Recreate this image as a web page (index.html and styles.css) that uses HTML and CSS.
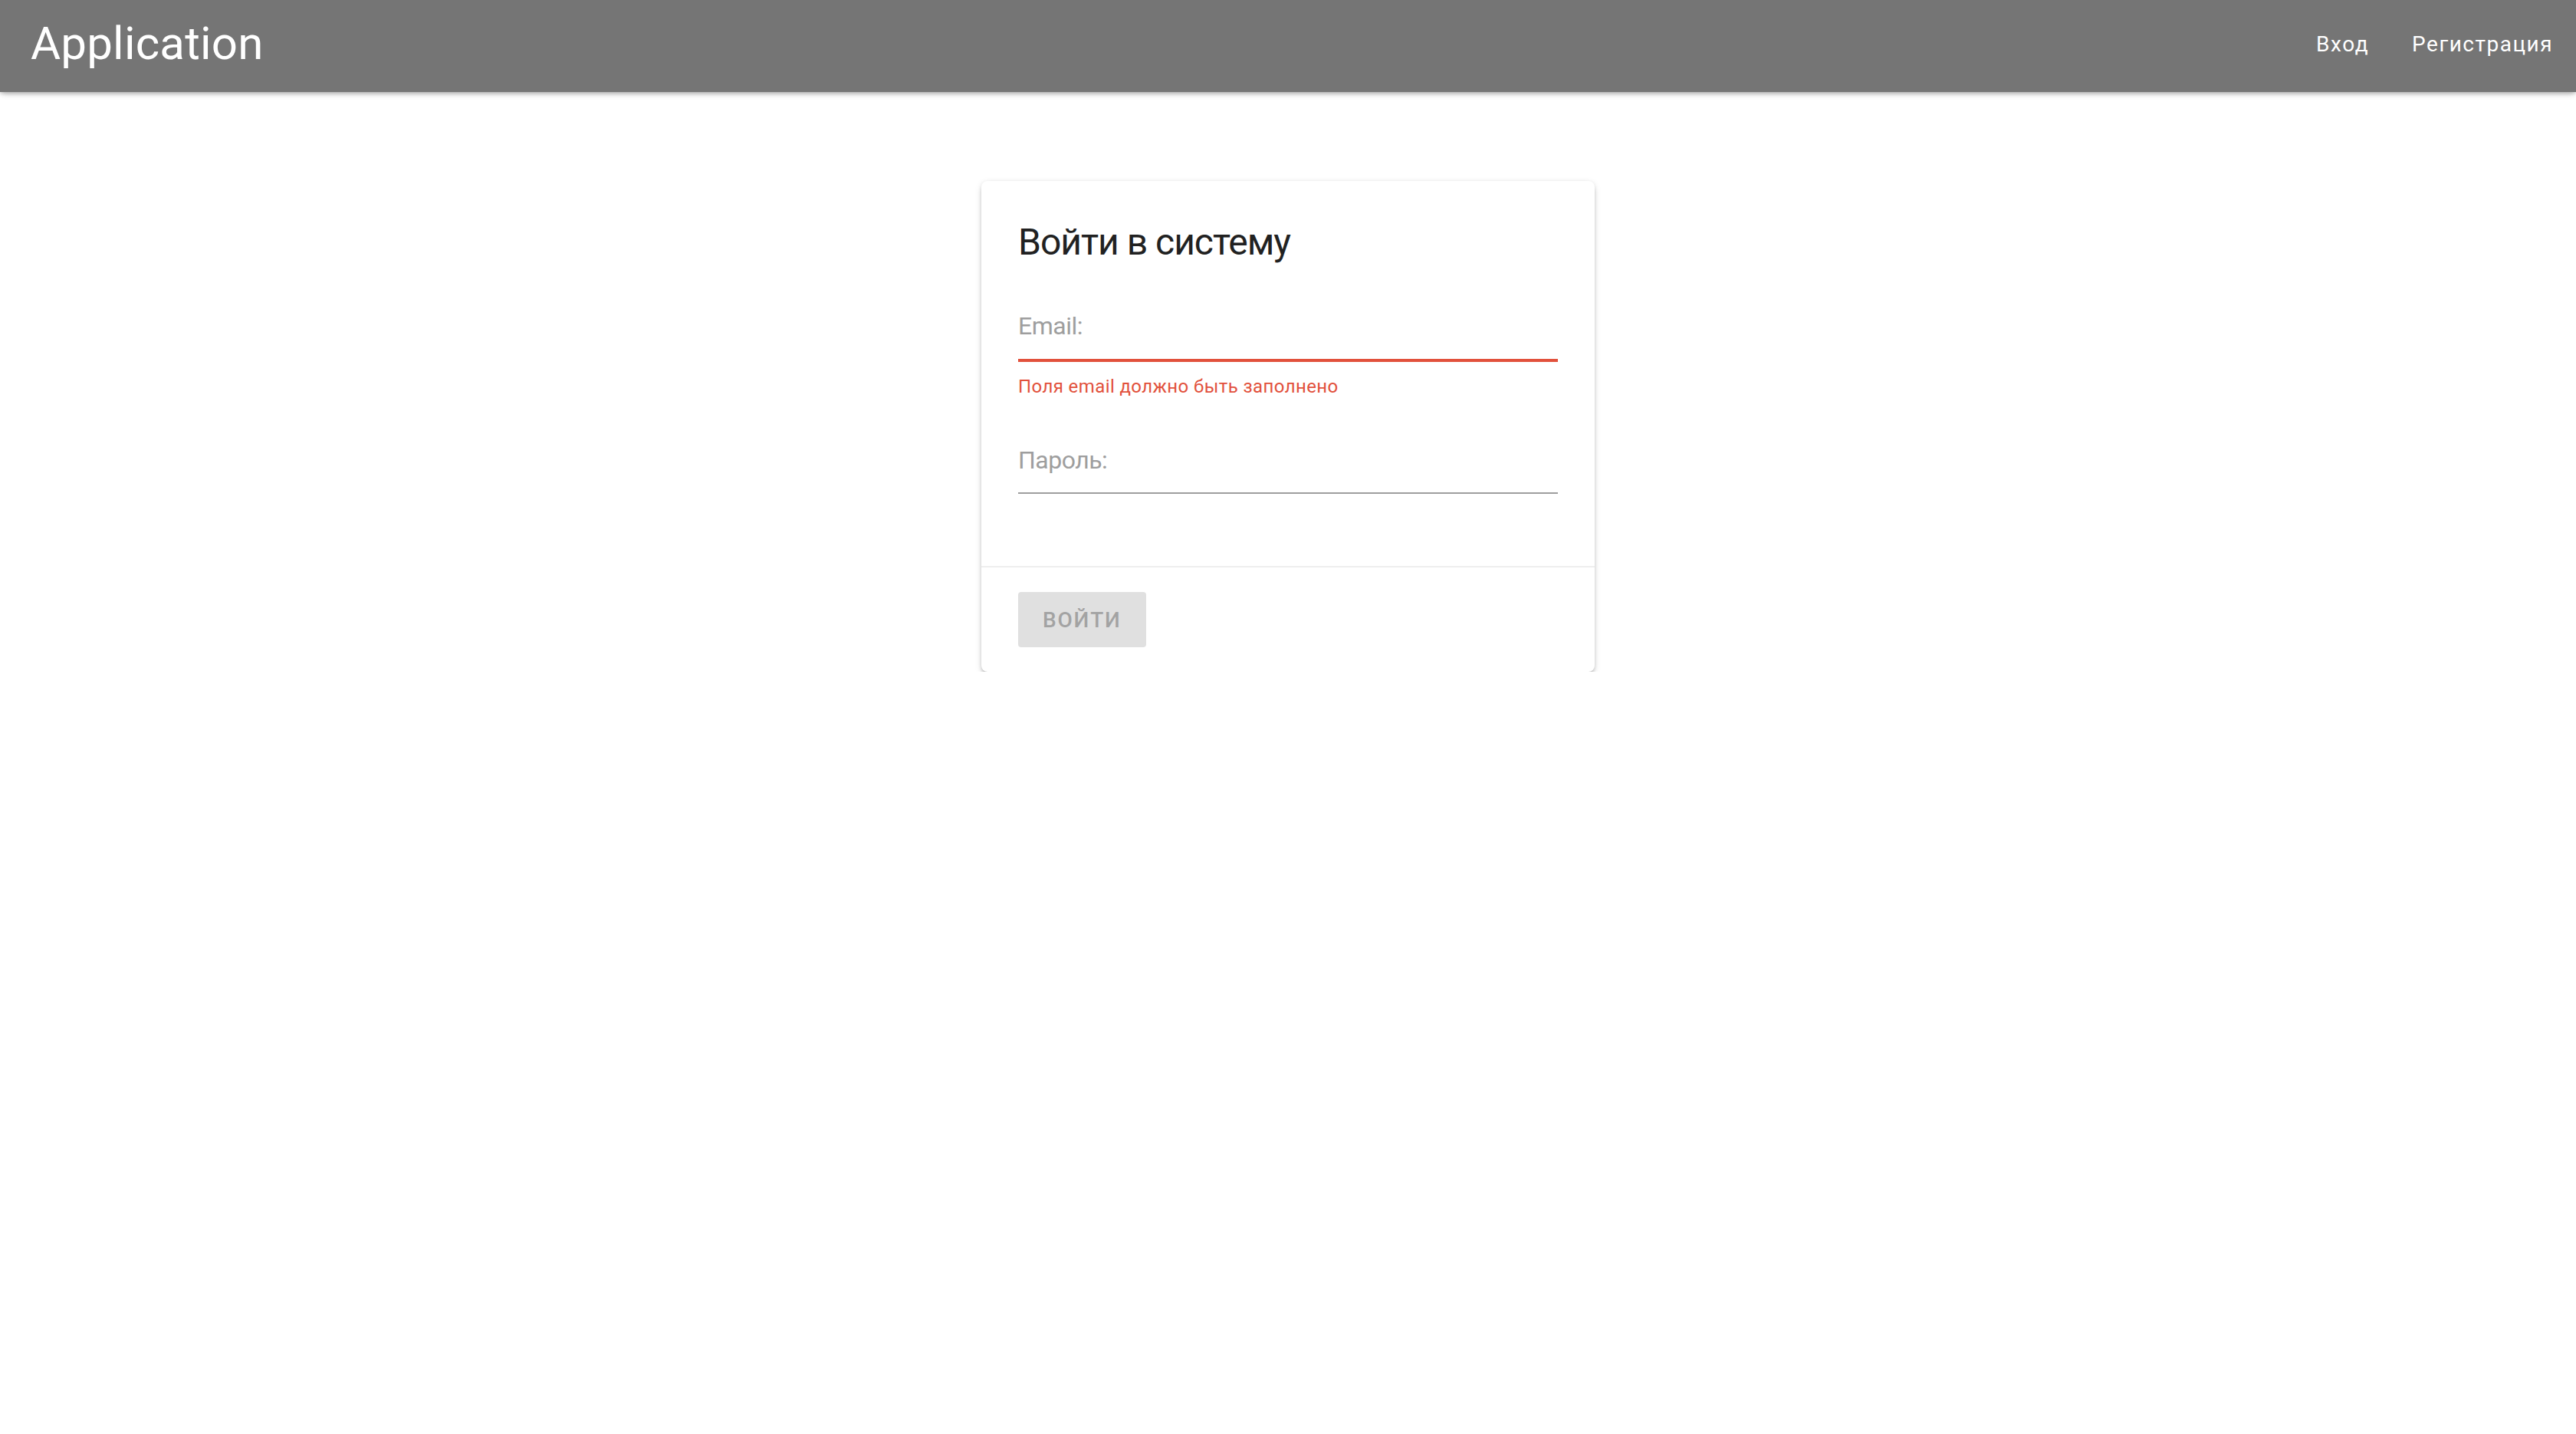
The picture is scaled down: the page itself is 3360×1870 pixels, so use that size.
FILE: index.html
```html
<!DOCTYPE html>
<html lang="ru">
<head>
<meta charset="utf-8">
<title>Application</title>
<link rel="stylesheet" href="styles.css">
</head>
<body>
<header class="toolbar">
  <div class="toolbar-title">Application</div>
  <nav class="toolbar-nav">
    <a class="nav-link" href="#">Вход</a>
    <a class="nav-link" href="#">Регистрация</a>
  </nav>
</header>
<main class="main">
  <section class="card">
    <div class="card-body">
      <h1 class="card-title">Войти в систему</h1>
      <div class="field field-error">
        <div class="field-label">Email:</div>
      </div>
      <div class="field-message">Поля email должно быть заполнено</div>
      <div class="field field-password">
        <div class="field-label">Пароль:</div>
      </div>
    </div>
    <div class="card-actions">
      <button class="btn" disabled>Войти</button>
    </div>
  </section>
</main>
</body>
</html>
```
FILE: styles.css
```css
* { box-sizing: border-box; }
html, body { margin: 0; padding: 0; background: #ffffff; }
body { font-family: Roboto, "Noto Sans", "Liberation Sans", sans-serif; color: #212121; }

.toolbar {
  height: 120px;
  background: #757575;
  color: #ffffff;
  display: flex;
  align-items: center;
  justify-content: space-between;
  padding: 0 30px 0 40px;
  box-shadow: 0 4px 8px -2px rgba(0,0,0,0.25), 0 2px 4px rgba(0,0,0,0.14);
  position: relative;
  z-index: 1;
}
.toolbar-title { font-size: 60px; font-weight: 400; letter-spacing: 0.2px; line-height: 1; padding-bottom: 6px; }
.toolbar-nav { display: flex; gap: 56px; }
.nav-link { color: #ffffff; text-decoration: none; font-size: 28px; letter-spacing: 1.5px; line-height: 1; padding-bottom: 4px; }

.main { display: flex; justify-content: center; padding-top: 116px; }

.card {
  width: 800px;
  background: #ffffff;
  border-radius: 8px;
  box-shadow: 0 6px 6px -3px rgba(0,0,0,0.28), 0 3px 10px rgba(0,0,0,0.12), 0 1px 4px rgba(0,0,0,0.08);
}
.card-body { padding: 48px 48px 94px; }
.card-title { margin: 0; font-size: 48px; font-weight: 400; line-height: 64px; letter-spacing: -1px; color: #212121; }

.field { padding-bottom: 18px; border-bottom: 2px solid #9e9e9e; }
.field-error { margin-top: 53px; border-bottom: 4px solid #e2513c; padding-bottom: 19px; }
.field-password { margin-top: 56px; }
.field-label { font-size: 32px; line-height: 48px; letter-spacing: -0.5px; color: #9e9e9e; }
.field-message { margin-top: 16px; font-size: 24px; line-height: 32px; letter-spacing: 0.4px; color: #e2513c; }

.card-actions { border-top: 2px solid #eeeeee; padding: 32px 48px; }
.btn {
  height: 72px;
  padding: 0 32px;
  border: 0;
  border-radius: 4px;
  background: #e0e0e0;
  color: #a3a3a3;
  font-family: Roboto, "Noto Sans", "Liberation Sans", sans-serif;
  font-size: 28px;
  font-weight: 500;
  text-transform: uppercase;
  letter-spacing: 1.8px;
}
```
